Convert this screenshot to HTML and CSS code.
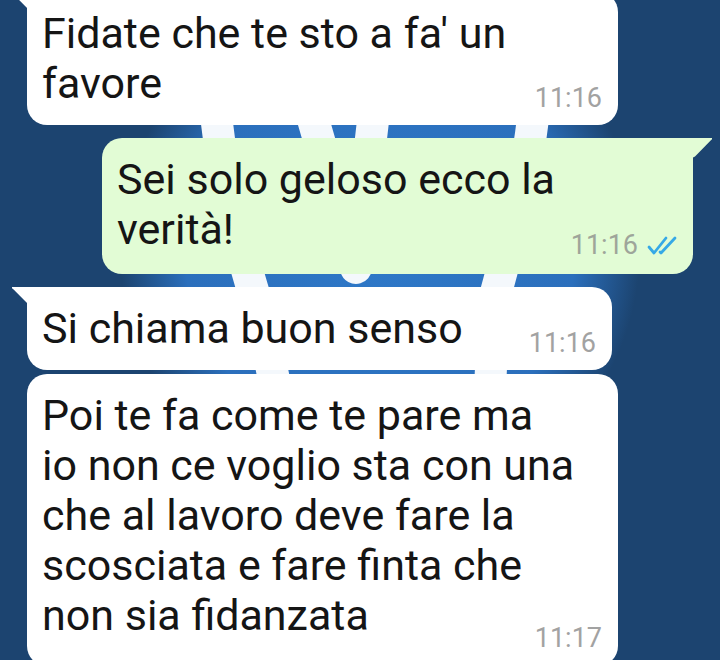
FILE: index.html
```html
<!DOCTYPE html>
<html lang="it">
<head>
  <meta charset="UTF-8" />
  <meta name="viewport" content="width=device-width, initial-scale=1" />
  <title>Chat</title>
  <link rel="stylesheet" href="styles.css">
</head>
<body>
  <!-- Wallpaper behind the messages -->
  <div class="wallpaper">
    <svg width="720" height="660" viewBox="0 0 720 660">
      <defs>
        <radialGradient id="glow" cx="380" cy="250" r="260" gradientUnits="userSpaceOnUse">
          <stop offset="0" stop-color="#2e78c8"/>
          <stop offset="0.75" stop-color="#2b6fbc"/>
          <stop offset="1" stop-color="#1c4470"/>
        </radialGradient>
      </defs>
      <ellipse cx="380" cy="250" rx="280" ry="260" fill="url(#glow)"/>
      <g fill="none" stroke="#f4f8fc" stroke-width="32" stroke-linecap="round" stroke-linejoin="round">
        <path d="M214 90 C220 180 240 250 262 320 L276 390"/>
        <path d="M536 90 C528 180 510 240 494 300 L490 390"/>
        <path d="M306 95 L356 268 L376 95"/>
      </g>
    </svg>
  </div>

  <!-- Messages -->
  <main class="chat">
    <div class="bubble in tail">
      <p class="text">Fidate che te sto a fa' un<br>favore</p>
      <span class="time">11:16</span>
    </div>

    <div class="bubble out tail">
      <p class="text">Sei solo geloso ecco la<br>verità!</p>
      <span class="time">11:16
        <svg class="ticks" width="34" height="20" viewBox="0 0 34 20">
          <path d="M3 11 L8 17 L20 2" fill="none" stroke="#36a9e6" stroke-width="2.8" stroke-linecap="round" stroke-linejoin="round"/>
          <path d="M14 16 L15 17 L29 2" fill="none" stroke="#36a9e6" stroke-width="2.8" stroke-linecap="round" stroke-linejoin="round"/>
        </svg>
      </span>
    </div>

    <div class="bubble in tail short">
      <p class="text">Si chiama buon senso</p>
      <span class="time">11:16</span>
    </div>

    <div class="bubble in follow">
      <p class="text">Poi te fa come te pare ma<br>io non ce voglio sta con una<br>che al lavoro deve fare la<br>scosciata e fare finta che<br>non sia fidanzata</p>
      <span class="time">11:17</span>
    </div>
  </main>
</body>
</html>
```

FILE: styles.css
```css
/* Basic Reset */
* {
  margin: 0;
  padding: 0;
  box-sizing: border-box;
}

body {
  width: 720px;
  height: 660px;
  overflow: hidden;
  background: #1c4470;
  font-family: Roboto, "Noto Sans", sans-serif;
  position: relative;
}

/* Wallpaper logo, sits under the bubbles */
.wallpaper {
  position: absolute;
  top: 0;
  left: 0;
  z-index: 0;
}

.wallpaper svg {
  display: block;
}

/* Message list */
.chat {
  position: relative;
  z-index: 1;
  display: flex;
  flex-direction: column;
  margin-top: -8px;
}

.bubble {
  position: relative;
  display: grid;
  padding: 16px 16px 17px 15px;
  border-radius: 20px;
  width: 591px;
  margin-top: 13px;
}

.bubble:first-child {
  margin-top: 0;
}

/* text and time share the same cell, time goes to the bottom right */
.bubble > * {
  grid-area: 1 / 1;
}

.text {
  font-size: 43px;
  line-height: 50px;
  color: #151515;
  white-space: nowrap;
}

.time {
  align-self: end;
  justify-self: end;
  display: flex;
  align-items: center;
  gap: 8px;
  font-size: 27px;
  line-height: 27px;
  color: #a2a2a2;
  margin-bottom: -4px;
}

.in {
  background: #fff;
  margin-left: 27px;
}

.out {
  background: #e2fcd5;
  margin-left: 102px;
  padding-bottom: 20px;
}

.out .time {
  color: #9ea59a;
  margin-right: -3px;
  margin-bottom: -5px;
}

.short {
  width: 585px;
}

.follow {
  margin-top: 4px;
  padding-bottom: 26px;
}

.follow .time {
  margin-bottom: -12px;
}

/* Bubble tails */
.tail.in {
  border-top-left-radius: 0;
}

.tail.out {
  border-top-right-radius: 0;
}

.tail::before {
  content: "";
  position: absolute;
  top: 0;
  width: 20px;
  height: 20px;
  background: inherit;
}

.tail.in::before {
  left: -15px;
  clip-path: polygon(0 0, 100% 0, 100% 100%, 85% 90%, 8% 12%, 0 6%);
}

.tail.out::before {
  right: -19px;
  clip-path: polygon(0 0, 100% 0, 100% 6%, 92% 14%, 15% 92%, 0 100%);
}
```
